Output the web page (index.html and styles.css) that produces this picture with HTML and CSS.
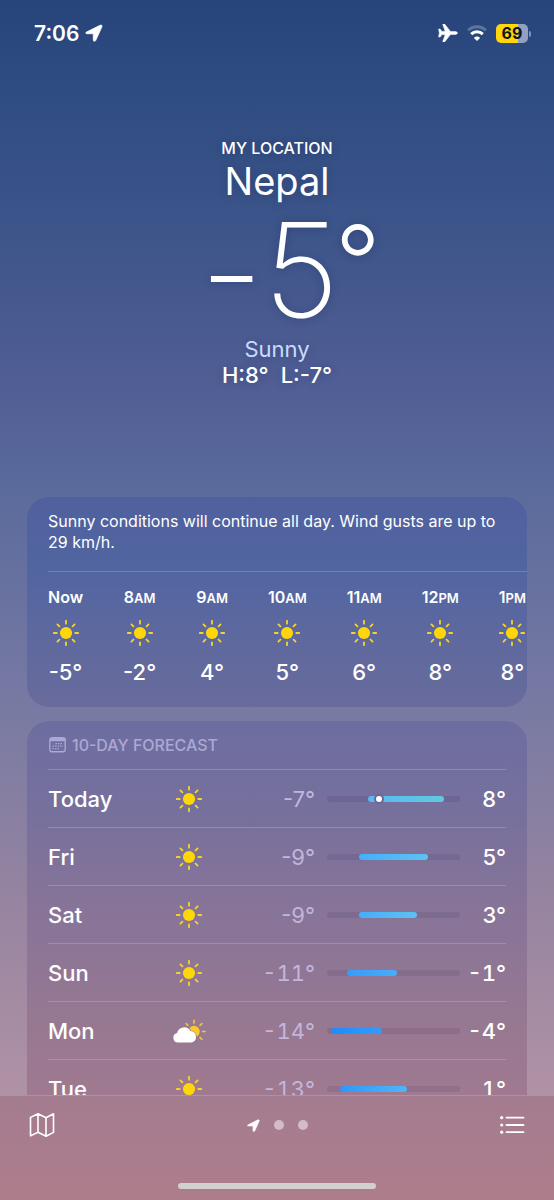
FILE: index.html
```html
<!DOCTYPE html>
<html lang="en">
<head>
<meta charset="utf-8">
<meta name="viewport" content="width=device-width, initial-scale=1">
<title>Weather</title>
<link rel="stylesheet" href="styles.css">
</head>
<body>
<svg class="defs" aria-hidden="true">
  <symbol id="sun" viewBox="0 0 24 24">
    <circle cx="12" cy="12" r="5.6" fill="#ffd60a"/>
    <path d="M12 .8v2.600M12 20.600v2.600M.8 12h2.600M20.600 12h2.600M4.100 4.100l1.800 1.800M18.100 18.100l1.800 1.800M4.100 19.900l1.800-1.800M18.100 5.900l1.800-1.800" stroke="#f6d32a" stroke-width="1.700" stroke-linecap="round" fill="none"/>
  </symbol>
  <symbol id="partly" viewBox="0 0 34 24">
    <circle cx="22" cy="12.500" r="5.700" fill="#fcc82c"/>
    <path d="M22 1.300v2.600M30.600 12.500h2.400M14.100 4.600l1.800 1.800M28.100 6.400l1.800-1.800M28.100 18.600l1.800 1.800" stroke="#efc63c" stroke-width="1.700" stroke-linecap="round" fill="none"/>
    <path d="M6 23.400a4.700 4.700 0 0 1-.9-9.300 7.200 7.200 0 0 1 13.400-2 5.700 5.700 0 0 1 .8 11.300z" fill="#fff" stroke="#98798f" stroke-width="1.400" paint-order="stroke"/>
  </symbol>
  <symbol id="arrow" viewBox="0 0 18 18">
    <path d="M1.600 8 15.200 1.200c1.200-.6 2.200.4 1.700 1.600L10.700 16.500c-.6 1.300-2.400.9-2.400-.5V10.100c0-.3-.1-.4-.4-.4H2.100C.5 9.700.2 8.700 1.600 8z" fill="#fff" stroke="#fff" stroke-width=".8" stroke-linejoin="round"/>
  </symbol>
</svg>

<header class="status">
  <div class="status-side">
    <time class="clock">7:06</time>
    <svg class="icon-18" role="img" aria-label="Location in use"><use href="#arrow"/></svg>
  </div>
  <div class="status-side status-right">
    <svg class="plane" viewBox="0 0 20 18" role="img" aria-label="Airplane mode"><path d="M17.600 7.600c1 .2 1.900.7 1.900 1.400s-.9 1.200-1.900 1.400l-5.200.2-5.300 6.800c-.3.400-.6.500-1 .5h-.9c-.3 0-.5-.3-.4-.6l2.400-6.500-3.300-.2-1.500 2.100c-.2.300-.4.400-.8.400H1c-.3 0-.5-.2-.4-.5L1.400 9 .6 5.400c-.1-.3.100-.5.4-.5h.6c.4 0 .6.100.8.400l1.500 2.100 3.300-.2L4.800.7c-.1-.3.1-.6.4-.6h.9c.4 0 .7.1 1 .5l5.300 6.800z" fill="#fff" stroke="#fff" stroke-width=".5"/></svg>
    <svg class="wifi" viewBox="0 0 20 16" role="img" aria-label="Wi-Fi"><g fill="none" stroke="#fff" stroke-width="2.900"><path d="M1.200 5.300a12.600 12.600 0 0 1 17.600 0" opacity=".25"/><path d="M4.200 9.100a8.200 8.200 0 0 1 11.600 0"/></g><path d="m10 16-3.100-3.100a4.400 4.400 0 0 1 6.200 0z" fill="#fff"/></svg>
    <div class="battery">69</div>
  </div>
</header>

<main class="scroller">
  <section class="hero">
    <div class="eyebrow">MY LOCATION</div>
    <h1 class="city">Nepal</h1>
    <div class="temp"><span class="minus">-</span><span>5</span><span class="ring">°</span></div>
    <div class="condition">Sunny</div>
    <div class="range"><span>H:8°</span><span>L:-7°</span></div>
  </section>

  <section class="card hourly">
    <p class="summary">Sunny conditions will continue all day. Wind gusts are up to 29 km/h.</p>
    <ol class="hours">
      <li><span class="hour">Now</span><svg class="sun"><use href="#sun"/></svg><span class="deg">-5°</span></li>
      <li><span class="hour">8<small>AM</small></span><svg class="sun"><use href="#sun"/></svg><span class="deg">-2°</span></li>
      <li><span class="hour">9<small>AM</small></span><svg class="sun"><use href="#sun"/></svg><span class="deg">4°</span></li>
      <li><span class="hour">10<small>AM</small></span><svg class="sun"><use href="#sun"/></svg><span class="deg">5°</span></li>
      <li><span class="hour">11<small>AM</small></span><svg class="sun"><use href="#sun"/></svg><span class="deg">6°</span></li>
      <li><span class="hour">12<small>PM</small></span><svg class="sun"><use href="#sun"/></svg><span class="deg">8°</span></li>
      <li><span class="hour">1<small>PM</small></span><svg class="sun"><use href="#sun"/></svg><span class="deg">8°</span></li>
    </ol>
  </section>

  <section class="card daily">
    <h2 class="card-title">
      <svg class="calendar" viewBox="0 0 17 16" aria-hidden="true"><rect x=".8" y=".8" width="15.400" height="14" rx="2.200" fill="none" stroke="currentColor" stroke-width="1.400"/><path d="M1 1h15v3.200H1z" fill="currentColor"/><path d="M6.500 6.700H14M3.500 9.200H14M3.500 11.700H11" stroke="currentColor" stroke-width="1.300" stroke-dasharray="1.500 1"/></svg>
      10-DAY FORECAST
    </h2>
    <ol class="days">
      <li><span class="day">Today</span><svg class="sun"><use href="#sun"/></svg><span class="low">-7°</span><span class="track"><span class="fill c1" style="left:31%;width:57%"></span><span class="dot" style="left:39%"></span></span><span class="high">8°</span></li>
      <li><span class="day">Fri</span><svg class="sun"><use href="#sun"/></svg><span class="low">-9°</span><span class="track"><span class="fill c2" style="left:24%;width:52%"></span></span><span class="high">5°</span></li>
      <li><span class="day">Sat</span><svg class="sun"><use href="#sun"/></svg><span class="low">-9°</span><span class="track"><span class="fill c2" style="left:24%;width:44%"></span></span><span class="high">3°</span></li>
      <li class="tabular"><span class="day">Sun</span><svg class="sun"><use href="#sun"/></svg><span class="low">-11°</span><span class="track"><span class="fill c3" style="left:15%;width:38%"></span></span><span class="high">-1°</span></li>
      <li class="tabular"><span class="day">Mon</span><svg class="partly"><use href="#partly"/></svg><span class="low">-14°</span><span class="track"><span class="fill c4" style="left:3%;width:38%"></span></span><span class="high">-4°</span></li>
      <li class="tabular"><span class="day">Tue</span><svg class="sun"><use href="#sun"/></svg><span class="low">-13°</span><span class="track"><span class="fill c5" style="left:10%;width:50%"></span></span><span class="high">1°</span></li>
    </ol>
  </section>
</main>

<footer class="toolbar">
  <nav class="tools">
    <button class="tool" type="button" aria-label="Map"><svg viewBox="0 0 26 26" width="26" height="26"><path d="M1.500 5.400 9 1.800l8 4 7.500-4v18.600L17 24.200l-8-4-7.500 3.700zM9 1.800v18.400M17 5.800v18.400" fill="none" stroke="#fff" stroke-width="1.600" stroke-linejoin="round"/></svg></button>
    <div class="pages"><svg class="page-arrow"><use href="#arrow"/></svg><i></i><i></i></div>
    <button class="tool" type="button" aria-label="Locations"><svg viewBox="0 0 26 26" width="26" height="26"><path d="M7.500 5.700h17M7.500 13h17M7.500 20.200h17" stroke="#fff" stroke-width="1.800" stroke-linecap="round"/><g fill="#fff"><circle cx="2.700" cy="5.700" r="1.600"/><circle cx="2.700" cy="13" r="1.600"/><circle cx="2.700" cy="20.200" r="1.600"/></g></svg></button>
  </nav>
  <div class="home"></div>
</footer>
</body>
</html>
```

FILE: styles.css
```css
* { box-sizing: border-box; }

body {
  margin: 0;
  height: 100vh;
  display: flex;
  flex-direction: column;
  overflow: hidden;
  color: #fff;
  font-family: Inter, "Liberation Sans", sans-serif;
  background: linear-gradient(#27447b 0%, #2d4b80 6%, #3a5388 17%, #525f96 33%, #5b6b9c 41%, #787aa3 59%, #9684a0 75%, #b092a5 91%);
}

h1, h2, p, ol { margin: 0; padding: 0; font-weight: 400; }
ol { list-style: none; }
.defs { position: absolute; width: 0; height: 0; }

.status {
  flex: none;
  display: flex;
  justify-content: space-between;
  align-items: center;
  height: 66px;
  padding: 0 23px 0 34px;
}
.status-side { display: flex; align-items: center; gap: 6px; }
.status-right { gap: 9px; }
.clock { font-size: 21px; font-weight: 600; }
.icon-18 { width: 18px; height: 18px; }
.plane { width: 20px; height: 18px; }
.wifi { width: 20px; height: 16px; }
.battery {
  position: relative;
  width: 32px;
  height: 19px;
  margin-right: 3px;
  border-radius: 5px;
  background: linear-gradient(90deg, #ffd60a 69%, #93a0c0 69%);
  color: #10131c;
  font-size: 16px;
  line-height: 19px;
  font-weight: 700;
  text-align: center;
}
.battery::after {
  content: "";
  position: absolute;
  right: -3px;
  top: 7px;
  width: 2px;
  height: 6px;
  border-radius: 0 2px 2px 0;
  background: #8394ba;
}

.scroller { flex: 1; min-height: 0; overflow: hidden; padding: 0 27px; }

.hero {
  display: flex;
  flex-direction: column;
  align-items: center;
  padding: 72px 0 109px;
  text-shadow: 0 1px 8px rgba(20, 35, 80, .3);
}
.eyebrow { font-size: 16px; line-height: 20px; font-weight: 500; }
.city { font-size: 38px; line-height: 46px; }
.temp {
  display: flex;
  align-items: flex-start;
  height: 132px;
  padding-left: 26px;
  font-size: 130px;
  line-height: 132px;
  font-weight: 200;
}
.minus { font-size: 144px; line-height: 136px; }
.ring { margin-left: -4px; font-size: 100px; line-height: 114px; font-weight: 300; }
.condition { font-size: 22px; line-height: 26px; color: #c9dbff; }
.range { display: flex; gap: 12px; font-size: 22px; line-height: 26px; font-weight: 500; }

.card { border-radius: 22px; overflow: hidden; padding-left: 21px; }
.hourly {
  height: 210px;
  margin-bottom: 14px;
  background: linear-gradient(#50609f, #5165a0 34%, #5b68a0 60%, #696b9b);
}
.summary {
  padding: 14px 21px 18px 0;
  border-bottom: 1px solid rgba(255, 255, 255, .18);
  font-size: 16px;
  line-height: 21px;
}
.hours { display: flex; gap: 40px; padding-top: 14px; }
.hours li { flex: none; display: flex; flex-direction: column; align-items: center; }
.hour { font-size: 16px; line-height: 22px; font-weight: 600; }
.hour small { font-size: 13px; line-height: 1; }
.sun { width: 26px; height: 26px; }
.hours .sun { margin: 12px 0; }
.deg { font-size: 22px; line-height: 28px; font-weight: 500; }

.daily {
  padding-right: 21px;
  background: linear-gradient(#6c6da0, #76709d 22%, #877498 47%, #967892 75%, #a27a90 100%);
}
.card-title {
  display: flex;
  align-items: center;
  gap: 6px;
  height: 48px;
  padding-left: 1px;
  color: #aca8d4;
  font-size: 16px;
  font-weight: 500;
}
.calendar { width: 17px; height: 16px; }
.days li {
  display: grid;
  grid-template-columns: 109px 64px 94px 1fr 46px;
  align-items: center;
  height: 58px;
  border-top: 1px solid rgba(255, 255, 255, .18);
  font-size: 22px;
  font-weight: 500;
}
.tabular { font-variant-numeric: tabular-nums; }
.days .sun, .partly { justify-self: center; }
.partly { width: 34px; height: 24px; }
.low, .high { text-align: right; }
.low { color: #c4b5dc; font-weight: 400; }
.track {
  position: relative;
  height: 6px;
  margin-left: 12px;
  border-radius: 3px;
  background: rgba(50, 30, 80, .11);
}
.fill { position: absolute; top: 0; height: 6px; border-radius: 3px; }
.c1 { background: linear-gradient(90deg, #5ab8f5, #62c9dc); }
.c2 { background: linear-gradient(90deg, #46aefc, #5cc2f0); }
.c3 { background: linear-gradient(90deg, #349dfc, #48adfa); }
.c4 { background: linear-gradient(90deg, #1f8bfb, #329cfc); }
.c5 { background: linear-gradient(90deg, #2f98fb, #50b5f6); }
.dot {
  position: absolute;
  top: -2px;
  width: 10px;
  height: 10px;
  margin-left: -5px;
  border: 2px solid #6b6795;
  border-radius: 50%;
  background: #fff;
}

.toolbar {
  flex: none;
  display: flex;
  flex-direction: column;
  justify-content: space-between;
  height: 105px;
  padding: 16px 29px 11px;
  border-top: 1px solid #b48fa0;
  background: linear-gradient(#a47c90, #ae7d8b);
}
.tools { display: flex; justify-content: space-between; align-items: center; }
.tool { display: flex; padding: 0; border: 0; background: none; }
.pages { display: flex; align-items: center; gap: 14px; }
.pages i { width: 10px; height: 10px; border-radius: 50%; background: #d3bbc8; }
.page-arrow { width: 13px; height: 13px; }
.home { align-self: center; width: 40%; height: 6px; border-radius: 3px; background: #d3d0d0; }
```
